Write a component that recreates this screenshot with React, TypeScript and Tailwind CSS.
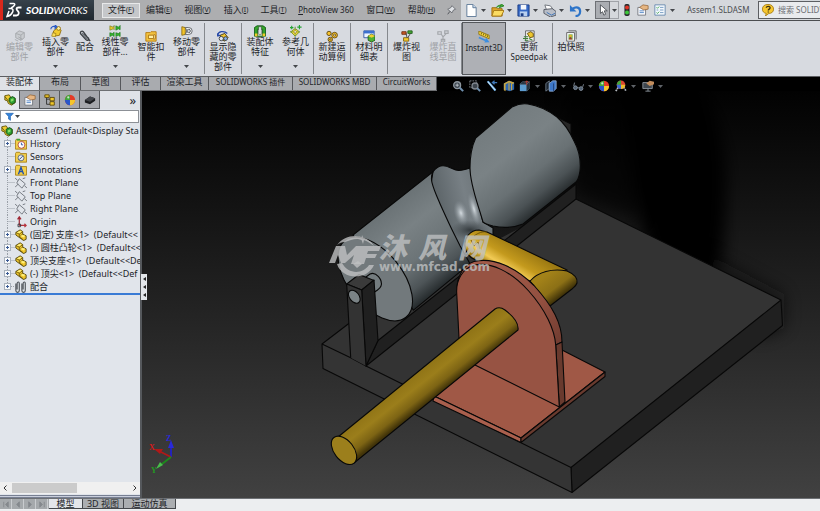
import React, { useState } from "react";

interface Command {
    label: string[];
    icon: string;
    width: string;
    menu?: boolean;
    disabled?: boolean;
    pressed?: boolean;
    divider?: boolean;
}

interface TreeItem {
    text: string;
    icon: string;
    expandable?: boolean;
}

const menus = [
    { text: "文件", key: "F", width: "w-[38px]" },
    { text: "编辑", key: "E", width: "w-[38px]" },
    { text: "视图", key: "V", width: "w-[39px]" },
    { text: "插入", key: "I", width: "w-[38px]" },
    { text: "工具", key: "T", width: "w-[37px]" },
    { text: "PhotoView 360", key: "", width: "w-[68px]" },
    { text: "窗口", key: "W", width: "w-[41px]" },
    { text: "帮助", key: "H", width: "w-[41px]" },
];

const commands: Command[] = [
    { label: ["编辑零", "部件"], icon: "editPart", width: "w-[37px]", disabled: true },
    { label: ["插入零", "部件"], icon: "insert", width: "w-[35px]", menu: true },
    { label: ["配合"], icon: "clip", width: "w-[24px]" },
    { label: ["线性零", "部件..."], icon: "pattern", width: "w-[36px]", menu: true },
    { label: ["智能扣", "件"], icon: "fastener", width: "w-[36px]" },
    { label: ["移动零", "部件"], icon: "move", width: "w-[35px]", menu: true, divider: true },
    { label: ["显示隐", "藏的零", "部件"], icon: "hidden", width: "w-[36px]", divider: true },
    { label: ["装配体", "特征"], icon: "feature", width: "w-[36px]", menu: true },
    { label: ["参考几", "何体"], icon: "geometry", width: "w-[35px]", menu: true, divider: true },
    { label: ["新建运", "动算例"], icon: "gears", width: "w-[36px]", divider: true },
    { label: ["材料明", "细表"], icon: "bom", width: "w-[36px]", divider: true },
    { label: ["爆炸视", "图"], icon: "explode", width: "w-[37px]" },
    { label: ["爆炸直", "线草图"], icon: "explodeLine", width: "w-[36px]", disabled: true, divider: true },
    { label: ["Instant3D"], icon: "ruler", width: "w-[44px]", pressed: true },
    { label: ["更新", "Speedpak"], icon: "speedpak", width: "w-[46px]", divider: true },
    { label: ["拍快照"], icon: "snapshot", width: "w-[36px]" },
];

const ribbonTabs = [
    { text: "装配体", width: "w-[40px]" },
    { text: "布局", width: "w-[41px]" },
    { text: "草图", width: "w-[40px]" },
    { text: "评估", width: "w-[40px]" },
    { text: "渲染工具", width: "w-[48px]" },
    { text: "SOLIDWORKS 插件", width: "w-[84px]" },
    { text: "SOLIDWORKS MBD", width: "w-[84px]" },
    { text: "CircuitWorks", width: "w-[60px]" },
];

const treeItems: TreeItem[] = [
    { text: "History", icon: "history", expandable: true },
    { text: "Sensors", icon: "sensors" },
    { text: "Annotations", icon: "annotations", expandable: true },
    { text: "Front Plane", icon: "plane" },
    { text: "Top Plane", icon: "plane" },
    { text: "Right Plane", icon: "plane" },
    { text: "Origin", icon: "origin" },
    { text: "(固定) 支座<1>  (Default<<", icon: "part", expandable: true },
    { text: "(-) 圆柱凸轮<1>  (Default<<", icon: "part", expandable: true },
    { text: "顶尖支座<1>  (Default<<De", icon: "part", expandable: true },
    { text: "(-) 顶尖<1>  (Default<<Def", icon: "part", expandable: true },
    { text: "配合", icon: "mates", expandable: true },
];

const isLatin = (text: string) => /[A-Za-z]{4}/.test(text);

const folder = <path d="M.5 3l1-1.500h4L6.500 3h7v10H.5z" fill="#f3cf4b" stroke="#a47c14" />;

const icons: Record<string, React.ReactNode> = {
    editPart: (
        <g fill="#c9ccd0" stroke="#a3a6aa">
            <path d="M2 4l4-3 6 2v6l-4 3-6-3z" />
            <path d="M2 4l6 2v6M8 6l4-3M5 8l5 3M1 11l4 2" fill="none" />
        </g>
    ),
    insert: (
        <g>
            <path d="M4 7l5-4 4 3-2 6-6 1z" fill="#f2cb2f" stroke="#8d6b0c" />
            <circle cx="10" cy="4" r="2.200" fill="#fff39a" stroke="#8d6b0c" />
            <path d="M1 5c0-3 3-4 5-3M6 0v4L8 2z" fill="none" stroke="#2457c5" strokeWidth="1.300" />
            <path d="M3 9l4 1-1 4-4-1z" fill="#f7dc57" stroke="#8d6b0c" strokeWidth=".7" />
        </g>
    ),
    clip: (
        <g fill="none" stroke="#3c4044" strokeWidth="1.600">
            <path d="M13 13L5 2C3.500.5.8 2 2 4.500L8 11c2 2 4 .5 3-1.500L5.500 4" />
            <path d="M3.500 3.500l6 7" stroke="#70757b" strokeWidth="1.800" />
        </g>
    ),
    pattern: (
        <g>
            <path d="M1 1l4 1.500 1-2v5l-1-1L1 6z" fill="#e9c52d" stroke="#6f7d1a" strokeWidth=".7" />
            <g fill="#35b52c" stroke="#17701a" strokeWidth=".7">
                <path d="M8 1l3 1.500L13 .5v5l-2-1L8 6z" />
                <path d="M1 9l3 1 2-1.500v5L4 12l-3 1.500zM8 9l3 1 2-1.500v5L11 12l-3 1.500z" />
            </g>
        </g>
    ),
    fastener: (
        <g>
            <path d="M1 3h5l1-1h6v11H1z" fill="#f4c440" stroke="#b4770c" />
            <path d="M4 6h6v4H4zM10 5l2 1v4l-2 1" fill="#fff0a6" stroke="#a46b0b" />
        </g>
    ),
    move: (
        <g>
            <path d="M1 2l4 1v8l-4 1z" fill="#f2c52b" stroke="#8d6b0c" />
            <path d="M5 3h4a4 4 0 0 1 0 8H5l2-4z" fill="#fff" stroke="#51555b" />
            <circle cx="9" cy="7" r="2" fill="#cdd1d6" stroke="#51555b" />
        </g>
    ),
    hidden: (
        <g>
            <path d="M1 6c0-4 7-6 11-2M0 4l1 3 3-1" fill="none" stroke="#2548a8" strokeWidth="1.500" />
            <path d="M4 6l5-2 4 5-4 4-5-3z" fill="#f1c62d" stroke="#3c3312" />
            <circle cx="5" cy="10" r="2.500" fill="#dfe6ef" stroke="#353b43" />
            <circle cx="10" cy="10" r="2.200" fill="#88b0e4" stroke="#353b43" />
        </g>
    ),
    feature: (
        <g>
            <path d="M.5 3l3-2h7l3 2v10H.5z" fill="#35a52b" stroke="#0e5513" />
            <path d="M4 5h6v8H4z" fill="#d9efdb" stroke="#0e5513" />
            <path d="M5.500 2h3v9h-3z" fill="#eef0f2" stroke="#333" strokeWidth=".6" />
            <path d="M1 10h3v3H1zM10 10h3v3h-3z" fill="#f0c928" />
        </g>
    ),
    geometry: (
        <g>
            <path d="M6 4l5 4-5 5-5-5z" fill="#f3dc3b" stroke="#7c8c22" />
            <path d="M6 2v12M0 8h12" stroke="#4a8535" strokeDasharray="1.500 1" />
            <path d="M11 0v5M8.500 2.500h5M2 1v4M0 3h4" stroke="#24a332" strokeWidth="1.300" />
            <circle cx="6" cy="8" r="1.500" fill="#fff" stroke="#a08a15" />
        </g>
    ),
    gears: (
        <g fill="#f7c22d" stroke="#5a420b">
            <circle cx="3.500" cy="4" r="2.500" />
            <circle cx="10" cy="6" r="3.300" />
            <circle cx="5" cy="11" r="2.600" />
            <circle cx="5" cy="11" r=".8" fill="#fff" />
            <circle cx="10" cy="6" r="1.200" fill="#fff" />
        </g>
    ),
    bom: (
        <g>
            <path d="M1 1h12v8H1z" fill="#eef4ff" stroke="#2a50a0" />
            <path d="M1 1h12v3H1z" fill="#3c70cf" />
            <path d="M6 7l4-2 4 2v5l-4 2-4-2z" fill="#4eb034" stroke="#1b5c1a" />
            <path d="M6 7l4 2 4-2-4-2z" fill="#f3cd31" />
        </g>
    ),
    explode: (
        <g>
            <path d="M1 2h5v3H1z" fill="#cf5a26" stroke="#6c2b0d" />
            <path d="M8 1h5v3H8z" fill="#46a935" stroke="#205c18" />
            <path d="M3 9h6v4H3z" fill="#f4ca2f" stroke="#7c5c0c" />
            <path d="M6 4l1 5M11 4L8 9" stroke="#3c3c3c" />
        </g>
    ),
    explodeLine: (
        <g fill="none" stroke="#a2a5a9" strokeWidth="1.300">
            <path d="M1 2h4v3H1zM9 1h4v3H9zM5 5l2 3 4-4M7 8v5M5 11h4v3H5z" />
        </g>
    ),
    ruler: (
        <g>
            <path d="M1 0l12 5v4L1 4z" fill="#f4d53d" stroke="#8b7013" />
            <path d="M4 2v2M6.500 3v2M9 4v2M11 5v2" stroke="#6c560d" />
            <path d="M1 7.500l8 3.500" stroke="#3d8ee0" strokeWidth="2" />
            <path d="M9.500 8l4 5-6 .5z" fill="#3d8ee0" />
        </g>
    ),
    speedpak: (
        <g>
            <path d="M3 1h10v12H3z" fill="#f5f5f2" stroke="#56585c" />
            <path d="M5 4l4-2 3 2v4L8 9z" fill="#edc62e" stroke="#5d480b" />
            <path d="M1 8h5M0 10h6M2 12h4M7 10l4 2" stroke="#3d7f34" strokeWidth="1.200" />
        </g>
    ),
    snapshot: (
        <g>
            <path d="M4 1h9v10" fill="none" stroke="#555" />
            <path d="M2 3h9v10H2z" fill="#fff" stroke="#555" />
            <path d="M4 5h5v6H4z" fill="#7cae59" />
            <circle cx="6.500" cy="7" r="1.500" fill="#e7b626" />
            <path d="M4 11l2-3 3 3z" fill="#9c3e2e" />
        </g>
    ),
    assembly: (
        <g>
            <path d="M1 2l5-1 2 3 5 1v5l-4 3-4-2-1-3-3-1z" fill="#f0cc31" stroke="#5d5108" />
            <path d="M6 5l4-2 3 2v5l-4 2-3-3z" fill="#2fa235" stroke="#0d4a12" />
            <path d="M8 6l3-1v3L8 9z" fill="#8ade65" />
            <path d="M1 3l4 5" stroke="#5d5108" />
        </g>
    ),
    property: (
        <g>
            <path d="M1 4h9v9H1z" fill="#f6f8fb" stroke="#70757c" />
            <path d="M3 8h5M3 10h5" stroke="#4d82c4" />
            <path d="M3 4l4-3 6 1v4L8 7z" fill="#e6b682" stroke="#8c5e34" strokeWidth=".8" />
        </g>
    ),
    config: (
        <g>
            <path d="M3 2v10h5M3 6h5" fill="none" stroke="#292929" />
            <path d="M1 1h5v3H1zM7 4h5v4H7zM7 9h5v4H7z" fill="#f1c92b" stroke="#56430a" />
        </g>
    ),
    ball: (
        <g>
            <circle cx="7" cy="7" r="6" fill="#e43b26" />
            <path d="M7 1a6 6 0 0 0-6 6h6z" fill="#3fa83c" />
            <path d="M1 7a6 6 0 0 0 6 6V7z" fill="#2956c9" />
            <path d="M7 13a6 6 0 0 0 6-6H7z" fill="#f5c62b" />
            <circle cx="5" cy="4" r="1.300" fill="#fff" opacity=".7" />
        </g>
    ),
    dim: (
        <g>
            <path d="M1 7l6-4 6 2v3l-6 4-6-2z" fill="#1d1f22" />
            <path d="M1 7l6-4 6 2-6 4z" fill="#44474c" />
        </g>
    ),
    funnel: <path d="M1 2h12L8.500 7v6l-3-2V7z" fill="#3585dc" stroke="#1d5cab" />,
    history: (
        <g>
            {folder}
            <circle cx="7.500" cy="8" r="4" fill="#fff" stroke="#b0413a" />
            <path d="M7.500 5.500V8h2" fill="none" stroke="#274c9e" />
            <path d="M2 2h4" stroke="#3aa13b" strokeWidth="2" />
        </g>
    ),
    sensors: (
        <g>
            {folder}
            <circle cx="7" cy="8" r="3.500" fill="#e6ecf5" stroke="#556174" />
            <path d="M5 10l4-4" stroke="#20396c" />
        </g>
    ),
    annotations: (
        <g>
            {folder}
            <path d="M4 12l3-8 3 8M5 9h4" fill="none" stroke="#1d4fae" strokeWidth="1.500" />
        </g>
    ),
    plane: (
        <g fill="none" stroke="#666b73">
            <path d="M5 2l7 6-4 5-6-6zM0 1l3 3M0 12l4-4M14 13l-3-3M9 2l3-1" />
        </g>
    ),
    origin: (
        <g fill="none" strokeWidth="1.400">
            <path d="M5 11V2M3 4l2-3 2 3" stroke="#9f2734" />
            <path d="M5 11h8M11 9l2 2-2 2" stroke="#b5333d" />
            <path d="M3.500 9.500h3v3h-3z" stroke="#30343a" strokeWidth="1" />
        </g>
    ),
    part: (
        <g>
            <path d="M1 4l5-3 3 2v3l4 2v4l-3 1.500L1 7z" fill="#efc52c" stroke="#4c410c" />
            <path d="M1 4l4 2 4-3M5 6v3l4-3M5 9l5 4" fill="none" stroke="#6d5a0b" />
            <path d="M2 4l4-2 2 1-3 2zM6 8l3-1 3 1-2 2z" fill="#fff07a" />
        </g>
    ),
    mates: (
        <g fill="none" stroke="#4e5359" strokeWidth="1.300">
            <path d="M1 3v8c0 3 4 3 4 0V3C5 0 2.500 1 2.500 3v7M8 3v8c0 3 4 3 4 0V3c0-3-2.500-2-2.500 0v7" />
        </g>
    ),
    pin: (
        <g>
            <path d="M7 1l5 5-3 1-2 4-6-5 4-2z" fill="#dfe2e6" stroke="#54585e" />
            <path d="M4 9l-3 4" stroke="#54585e" strokeWidth="1.400" />
        </g>
    ),
    newDoc: (
        <g>
            <path d="M2 .5h6.500L12 4v9.500H2z" fill="#fff" stroke="#5c7896" />
            <path d="M8.500.5V4H12" fill="#cbdcf0" stroke="#5c7896" />
        </g>
    ),
    open: (
        <g>
            <path d="M1 4h5l1 1h5v8H1z" fill="#dda62a" stroke="#9b6c12" />
            <path d="M3 7h11l-3 6H1z" fill="#fbdc62" stroke="#a87a18" />
            <path d="M6 4c1-3 4-3 5-2M9 4l5-2-3-2z" fill="#49ae37" stroke="#2b8628" />
        </g>
    ),
    save: (
        <g>
            <path d="M1 1h12v12H1z" fill="#3569c6" stroke="#1b3d84" />
            <path d="M4 1h6v5H4z" fill="#f4f7fb" />
            <path d="M3 8h8v5H3z" fill="#b9d0ef" />
            <path d="M4 10h3v3H4z" fill="#1b3d84" />
        </g>
    ),
    print: (
        <g>
            <path d="M2 1l6 1 3 4-7 1z" fill="#fff" stroke="#6b7078" />
            <path d="M1 6l9-1 4 3v4l-6 2-7-4z" fill="#b9bec7" stroke="#555a62" />
            <path d="M4 9l5 3 4-2" fill="none" stroke="#3b72b7" />
        </g>
    ),
    undo: (
        <g>
            <path d="M4 5c4-3 8-1 8 3 0 3-2 5-5 5" fill="none" stroke="#2e75c9" strokeWidth="2.400" />
            <path d="M1 1v7h7z" fill="#2e75c9" />
        </g>
    ),
    cursor: <path d="M4 1v10l2.500-2L8 13l2-1-1.500-4H12z" fill="#fff" stroke="#44484e" />,
    traffic: (
        <g>
            <rect x="4" y="0" width="6" height="14" rx="2" fill="#2b2d2e" />
            <circle cx="7" cy="4" r="2.300" fill="#e33526" />
            <circle cx="7" cy="10" r="2.300" fill="#3cc83a" />
        </g>
    ),
    list: (
        <g>
            <path d="M1 1h12v12H1z" fill="#f3f8fd" stroke="#5f83aa" />
            <path d="M3 4l1 1 2-2M3 10l1 1 2-2" fill="none" stroke="#2d9c3a" />
            <path d="M7 4h4M7 7h4M7 10h4M3 7h2" stroke="#6d94bd" />
        </g>
    ),
    help: (
        <g>
            <path d="M7 .5c4 0 6.500 2.200 6.500 5.500S11 11 8 11l-4 3 1-3C2 10.500.5 8.500.5 6 .5 2.500 3 .5 7 .5z" fill="#f7c730" stroke="#a47a13" />
            <path d="M5 4.500c0-2.500 4.500-2.300 4.500 0C9.500 6 7.300 6 7.300 7.500M7.300 8.800V10" fill="none" stroke="#3d3210" strokeWidth="1.500" />
        </g>
    ),
    zoomFit: (
        <g fill="none" stroke="#8d959d">
            <circle cx="6" cy="6" r="4" fill="#3c454e" strokeWidth="1.600" />
            <path d="M4 6h4M6 4v4" stroke="#c6ccd2" />
            <path d="M9 9l4 4" stroke="#6f8fae" strokeWidth="2.400" />
        </g>
    ),
    zoomArea: (
        <g fill="none" stroke="#7f868e">
            <path d="M1 1h8v8H1z" strokeDasharray="2 1" />
            <circle cx="7" cy="7" r="3.500" fill="#3c444c" strokeWidth="1.500" />
            <path d="M9.500 9.500l3.500 3.500" stroke="#6f8fae" strokeWidth="2.400" />
        </g>
    ),
    previous: (
        <g>
            <path d="M1 2l2-1 9 10-2 2z" fill="#4f9ddd" />
            <path d="M2 2l9 10" stroke="#cfe3f4" strokeWidth="1.200" />
            <path d="M13 3H8M10 1L7.500 3 10 5" fill="none" stroke="#3f77b5" strokeWidth="1.500" />
        </g>
    ),
    section: (
        <g>
            <path d="M1 4l6-3 6 2v8l-5 2-7-2z" fill="#2d67b2" />
            <path d="M1 4l6-3 6 2-1 2-5-2-4 2v8l-2-1z" fill="#c7a643" />
            <path d="M7 3v9M10 4v8" stroke="#c7a643" strokeWidth="1.300" />
        </g>
    ),
    orient: (
        <g>
            <path d="M1 5h8v8H1z" fill="#5c9cd0" />
            <path d="M1 5l3-3h8L9 5z" fill="#22303d" stroke="#5b7389" strokeWidth=".7" />
            <path d="M9 5l3-3v8l-3 3z" fill="#1d2934" stroke="#5b7389" strokeWidth=".7" />
            <path d="M9 6V1M7 3l2-2 2 2" fill="none" stroke="#c23f33" />
        </g>
    ),
    display: (
        <g>
            <path d="M1 4l4-3v9l-4 3z" fill="#1b2530" stroke="#74818f" />
            <path d="M5 4l4-3h4v9l-3 3H5z" fill="#3d78c9" stroke="#8ea9cc" />
            <path d="M10 4v9" stroke="#1c3c72" />
        </g>
    ),
    glasses: (
        <g fill="#536273" stroke="#8893a0">
            <circle cx="4" cy="9" r="2.200" />
            <circle cx="10.500" cy="10" r="2.200" />
            <path d="M2 7l1-4M12.500 8l1-3M6 9h2" fill="none" />
        </g>
    ),
    scene: (
        <g>
            <path d="M1 13l3-5h6l3 5" fill="none" stroke="#b6bbc1" strokeWidth="2" strokeDasharray="2 1" />
            <circle cx="7" cy="5.500" r="5" fill="#db4430" />
            <path d="M7 .5a5 5 0 0 0-5 5h5z" fill="#3fa83c" />
            <path d="M2 5.500a5 5 0 0 0 5 5v-5z" fill="#3a68d6" />
            <path d="M7 10.500a5 5 0 0 0 5-5H7z" fill="#e9bd2b" />
        </g>
    ),
    viewSettings: (
        <g>
            <path d="M1 3h11v7H1z" fill="#3f474f" stroke="#959da5" />
            <path d="M4 13h6M7 10v3" stroke="#959da5" />
            <path d="M5 4l4-3 5 1v3l-5 2z" fill="#c18c5c" />
        </g>
    ),
};

const Icon = ({ name, className = "size-3" }: { name: string; className?: string }) => (
    <svg viewBox="0 0 14 14" className={`${className} shrink-0`} aria-hidden="true">
        {icons[name]}
    </svg>
);

const Caret = ({ className = "text-[#44474b]" }: { className?: string }) => (
    <svg viewBox="0 0 5 3" className={`h-[3px] w-[5px] shrink-0 ${className}`} aria-hidden="true">
        <path d="M0 0h5L2.500 3z" fill="currentColor" />
    </svg>
);

const TitleBar = () => (
    <header className="flex h-[21px] shrink-0 border-b border-[#4b4d50] bg-[#adaeb0]">
        <div className="flex w-[94px] shrink-0 items-center gap-1 border-l-[3px] border-[#d9281c] bg-linear-to-b from-[#37424b] to-[#20282f] pl-[3px] text-white">
            <svg viewBox="0 0 16 16" className="h-4 w-4 shrink-0" aria-hidden="true">
                <path d="M3.500 1.500h4c2.500 0 1 3-2.500 4.500M2.500 6.500H5C9 6.500 6.500 13.500 1 14.500L3 9" fill="none" stroke="#fff" strokeWidth="1.500" />
                <path d="M15.500 5.500h-3c-2.500 0-2.500 2-.7 3.500s1 4.500-1.300 4.500H7" fill="none" stroke="#fff" strokeWidth="1.800" />
            </svg>
            <span className="font-[Lato,sans-serif] text-[10px] leading-none italic">
                <b className="font-black">SOLID</b>WORKS
            </span>
        </div>
        <nav className="flex shrink-0 items-center pl-2">
            {menus.map((menu, index) => (
                <button
                    key={menu.text}
                    className={`flex h-[15px] items-center justify-center whitespace-nowrap ${menu.width} ${index === 0 ? "border border-[#e8e9ea] bg-[#c5c7ca]" : ""}`}
                >
                    {menu.key ? menu.text : (
                        <span className="text-[8px]"><u>P</u>hotoView 360</span>
                    )}
                    {menu.key && <span className="text-[7px]">(<u>{menu.key}</u>)</span>}
                </button>
            ))}
            <button aria-label="Pin menu" className="flex w-[19px] justify-center"><Icon name="pin" className="size-[10px]" /></button>
        </nav>
        <div className="flex min-w-0 flex-1 items-center bg-[#d5d8dc] pl-1">
            {["newDoc", "open", "save", "print", "undo"].map(name => (
                <button key={name} aria-label={name} className="flex w-[26px] shrink-0 items-center gap-[3px]">
                    <Icon name={name} className="size-[13px]" />
                    <Caret />
                </button>
            ))}
            <button aria-label="Select" className="flex h-[18px] w-[15px] shrink-0 items-center justify-center border border-[#6d7075] bg-[#aaadb2]">
                <Icon name="cursor" />
            </button>
            <button aria-label="Select options" className="flex h-[18px] w-[9px] shrink-0 items-center justify-center border border-l-0 border-[#a0a3a8]">
                <Caret />
            </button>
            <button aria-label="Rebuild" className="flex w-4 shrink-0 justify-center"><Icon name="traffic" /></button>
            <button aria-label="Properties" className="flex w-4 shrink-0 justify-center"><Icon name="property" /></button>
            <button aria-label="Options" className="flex w-[24px] shrink-0 items-center justify-end gap-1">
                <Icon name="list" />
                <Caret />
            </button>
            <span className="ml-3 w-[71px] shrink-0 text-[8px] text-[#4c4e52]">Assem1.SLDASM</span>
            <label className="flex h-[18px] min-w-0 flex-1 items-center gap-1 border border-r-0 border-[#5c5e62] bg-[#e9ebee] pl-[3px]">
                <Icon name="help" />
                <input aria-label="搜索" placeholder="搜索 SOLIDWORKS" className="w-0 min-w-0 flex-1 text-[8px] outline-none placeholder:text-[#6e7075]" />
            </label>
        </div>
    </header>
);

const Ribbon = () => (
    <section className="flex h-[55px] shrink-0 items-stretch bg-[#d7dae0] py-px pl-px">
        {commands.map(command => (
            <React.Fragment key={command.icon}>
                <button
                    disabled={command.disabled}
                    className={`flex shrink-0 flex-col items-center ${command.width} ${command.menu ? "pt-[3px]" : "pt-2"} ${command.disabled ? "text-[#a0a2a6]" : "text-[#222428]"} ${command.pressed ? "border border-[#55585c] bg-[#aeb0b5]" : ""}`}
                >
                    <Icon name={command.icon} />
                    {command.label.map(line => (
                        <span key={line} className={`leading-[10px] whitespace-nowrap ${isLatin(line) ? "text-[8px]" : ""}`}>{line}</span>
                    ))}
                    {command.menu && <span className="pt-2"><Caret /></span>}
                </button>
                {command.divider && <i className="my-px w-px shrink-0 bg-[#85888d]" />}
            </React.Fragment>
        ))}
    </section>
);

const hudIcons = [
    { name: "zoomFit", width: "w-[17px]" },
    { name: "zoomArea", width: "w-[17px]" },
    { name: "previous", width: "w-[17px]" },
    { name: "section", width: "w-[16px]" },
    { name: "orient", width: "w-[26px]", menu: true },
    { name: "display", width: "w-[27px]", menu: true },
    { name: "glasses", width: "w-[26px]", menu: true },
    { name: "ball", width: "w-[17px]" },
    { name: "scene", width: "w-[27px]", menu: true },
    { name: "viewSettings", width: "w-[26px]", menu: true },
];

const TabStrip = () => {
    const [active, setActive] = useState("装配体");

    return (
        <div className="flex h-[15px] shrink-0 border-t border-[#5c5e62] bg-black">
            <div role="tablist" className="flex shrink-0 border-b border-[#6d6f72]">
                {ribbonTabs.map(tab => (
                    <button
                        key={tab.text}
                        role="tab"
                        aria-selected={active === tab.text}
                        onClick={() => setActive(tab.text)}
                        className={`flex items-center justify-center border-r border-[#55575b] pb-1 leading-none whitespace-nowrap ${tab.width} ${isLatin(tab.text) ? "text-[8px]" : ""} ${active === tab.text ? "bg-[#dfe2e7]" : "bg-[#a9abaf]"}`}
                    >
                        {tab.text}
                    </button>
                ))}
            </div>
            <div className="relative z-10 flex h-[18px] items-center pl-[15px]">
                {hudIcons.map(item => (
                    <button key={item.name} aria-label={item.name} className={`flex shrink-0 items-center gap-1 ${item.width}`}>
                        <Icon name={item.name} />
                        {item.menu && <Caret className="text-[#5f6368]" />}
                    </button>
                ))}
            </div>
        </div>
    );
};

const FeaturePanel = () => {
    const [tab, setTab] = useState("assembly");

    return (
        <aside className="flex w-[142px] shrink-0 flex-col border-r-2 border-[#55585c] bg-[#e1e5eb]">
            <div className="flex h-[18px] shrink-0 bg-[#dfe2e7]">
                {["assembly", "property", "config", "ball", "dim"].map(name => (
                    <button
                        key={name}
                        aria-label={name}
                        onClick={() => setTab(name)}
                        className={`flex w-5 items-center justify-center border-r border-[#55585c] ${tab === name ? "bg-[#e6e9ee]" : "border-b bg-[#a6a8ad]"}`}
                    >
                        <Icon name={name} />
                    </button>
                ))}
                <button aria-label="More" className="ml-auto pr-1 text-[13px] leading-none">»</button>
            </div>
            <div className="mt-px mr-px flex h-[13px] shrink-0 items-center gap-px border border-[#8c9096] bg-white pl-1">
                <Icon name="funnel" className="size-[9px]" />
                <Caret />
                <input aria-label="Filter" className="h-full min-w-0 flex-1 outline-none" />
            </div>
            <div className="flex-1 overflow-hidden pt-px whitespace-pre">
                <div className="flex h-[13px] items-center gap-[3px] pl-px">
                    <Icon name="assembly" />
                    Assem1  (Default&lt;Display Sta
                </div>
                <ul className="border-b-2 border-[#3a7bd5]">
                    {treeItems.map((item, index) => (
                        <li key={index} className="flex h-[13px] items-center">
                            <svg viewBox="0 0 15 13" className="h-[13px] w-[15px] shrink-0" aria-hidden="true">
                                <path d={index === treeItems.length - 1 ? "M7.500 0v6.500H15" : "M7.500 0v13M7.500 6.500H15"} fill="none" stroke="#9aa0a8" strokeDasharray="1 1" />
                                {item.expandable && (
                                    <>
                                        <rect x="4.500" y="3.500" width="6" height="6" fill="#f8fafc" stroke="#a9b1bc" />
                                        <path d="M6 6.500h3M7.500 5v3" stroke="#3a5a94" />
                                    </>
                                )}
                            </svg>
                            <Icon name={item.icon} />
                            <span className="pl-[3px]">{item.text}</span>
                        </li>
                    ))}
                </ul>
            </div>
            <div className="flex h-3 shrink-0 items-center bg-[#f0f0f0] px-[3px]">
                <svg viewBox="0 0 4 6" className="h-[6px] w-1"><path d="M3.500.5L1 3l2.500 2.500" fill="none" stroke="#333" /></svg>
                <div className="mx-[5px] flex h-full flex-1 py-px"><div className="w-[56%] bg-[#cbcbcb]" /></div>
                <svg viewBox="0 0 4 6" className="h-[6px] w-1"><path d="M.5.5L3 3 .5 5.500" fill="none" stroke="#333" /></svg>
            </div>
            <div className="mt-px h-[3px] shrink-0 border-y border-[#777f92] bg-[#c9cedb]" />
        </aside>
    );
};

const Model = () => (
    <svg viewBox="142 91 678 407" preserveAspectRatio="xMidYMid slice" className="block size-full" role="img" aria-label="Assem1">
        <defs>
            <linearGradient id="back" x1="0" y1="0" x2="0" y2="1">
                <stop offset="0" stopColor="#020202" />
                <stop offset=".25" stopColor="#111" />
                <stop offset=".6" stopColor="#272727" />
                <stop offset="1" stopColor="#414141" />
            </linearGradient>
            <linearGradient id="steel" gradientUnits="userSpaceOnUse" x1="352" y1="234" x2="413" y2="312">
                <stop offset="0" stopColor="#6a7275" />
                <stop offset=".3" stopColor="#798184" />
                <stop offset=".6" stopColor="#6c7477" />
                <stop offset=".83" stopColor="#4d5457" />
                <stop offset="1" stopColor="#202527" />
            </linearGradient>
            <linearGradient id="steelFar" gradientUnits="userSpaceOnUse" x1="495" y1="122" x2="556" y2="199">
                <stop offset="0" stopColor="#747c7f" />
                <stop offset=".35" stopColor="#7a8285" />
                <stop offset=".65" stopColor="#697174" />
                <stop offset=".85" stopColor="#4b5255" />
                <stop offset="1" stopColor="#262b2d" />
            </linearGradient>
            <linearGradient id="neck" gradientUnits="userSpaceOnUse" x1="435" y1="195" x2="482" y2="184">
                <stop offset="0" stopColor="#5c6468" />
                <stop offset=".6" stopColor="#788085" />
                <stop offset="1" stopColor="#6c7478" />
            </linearGradient>
            <radialGradient id="shine">
                <stop offset="0" stopColor="#d5dce1" />
                <stop offset="1" stopColor="#8b949a" stopOpacity="0" />
            </radialGradient>
            <radialGradient id="shade">
                <stop offset="0" stopColor="#33393c" />
                <stop offset="1" stopColor="#454c50" stopOpacity="0" />
            </radialGradient>
            <linearGradient id="rod" gradientUnits="userSpaceOnUse" x1="410" y1="377" x2="429" y2="401">
                <stop offset="0" stopColor="#8f7316" />
                <stop offset=".4" stopColor="#9b7e1b" />
                <stop offset=".75" stopColor="#7d6414" />
                <stop offset="1" stopColor="#423409" />
            </linearGradient>
            <linearGradient id="tip" gradientUnits="userSpaceOnUse" x1="527" y1="249" x2="510" y2="277">
                <stop offset="0" stopColor="#9c7912" />
                <stop offset=".5" stopColor="#c49a1d" />
                <stop offset=".8" stopColor="#f2cb55" />
                <stop offset="1" stopColor="#a37d13" />
            </linearGradient>
            <linearGradient id="tipEnd" gradientUnits="userSpaceOnUse" x1="546" y1="275" x2="562" y2="296">
                <stop offset="0" stopColor="#a38219" />
                <stop offset=".6" stopColor="#8c7016" />
                <stop offset="1" stopColor="#3d3008" />
            </linearGradient>
            <linearGradient id="rim" gradientUnits="userSpaceOnUse" x1="480" y1="262" x2="562" y2="345">
                <stop offset="0" stopColor="#a45b4a" />
                <stop offset=".6" stopColor="#935040" />
                <stop offset="1" stopColor="#6f3b30" />
            </linearGradient>
            <filter id="soft" filterUnits="userSpaceOnUse" x="500" y="30" width="320" height="400">
                <feGaussianBlur stdDeviation="8" />
            </filter>
        </defs>
        <rect x="142" y="91" width="678" height="407" fill="url(#back)" />
        <path d="M620 60h60c30 20 46 80 46 120 0 50-2 84-14 110l-60-30-20-70z" fill="#020202" filter="url(#soft)" />
        <path d="M560 90h80v130l-64-26z" fill="#060606" opacity=".6" filter="url(#soft)" />
        <path d="M700 250l84 44v34l-25 10z" fill="#0c0c0c" opacity=".6" filter="url(#soft)" />

        <g stroke="#080808" strokeWidth="1.100" strokeLinejoin="round">
            <path d="M553 116l4 1 14 7v60h-18z" fill="#272727" />
            <path d="M322 344L377 302 576 199 781 300 571 467.500z" fill="#333" stroke="none" />
            <path d="M322 344L377 302M576 199l205 101" fill="none" />
            <path d="M571 467.500L781 300l1.500 25.500L572 492.500z" fill="#202020" />
            <path d="M322 344l28.700 13.700L366 366l205 101.500 1 25L323 368.500z" fill="#343434" />
            <path d="M378 340.500L576 184v15L366 366z" fill="#202020" />

            <path d="M433 171.700c3-4 6-6 10-6 6 0 11 5 16 4.700 4 0 7-1 11-2.400l13 54 10 6v14l-30 14-24-32-8-40z" fill="url(#neck)" />
            <ellipse cx="470" cy="230" rx="20" ry="10" fill="url(#shade)" stroke="none" />
            <ellipse cx="461" cy="213" rx="7" ry="13" fill="url(#shine)" stroke="none" transform="rotate(-15 461 213)" />
            <ellipse cx="474" cy="209" rx="5" ry="17" fill="url(#shine)" stroke="none" transform="rotate(-15 474 209)" />
            <path d="M353 235l80-63.300c-2 4-2 7-1 11 2 8 5 14 8 21 5 11 9 20 13 28 3 6 5 10 7 14l10 18-56.500 46.500z" fill="url(#steel)" />
            <path d="M475.700 138L512 107c6-3 10-4 16-3 13 2 21 7 29 13 8 7 13 15 17 24 6 11 7 20 6 30-1 6-2 9-4 11l-53 42c-10 4-21 4-30 2-4-1-8-2-10-4-5-18-13-37-13-54 0-12 1-20 5.700-30z" fill="url(#steelFar)" />
            <ellipse cx="375.300" cy="279" rx="49" ry="27" transform="rotate(51.300 375.300 279)" fill="#72797c" />

            <path d="M362 280l8-6c6-3 13 6 11 12-1 3-6 6-9 7z" fill="#747c7f" />
            <path d="M346.700 284l12.300-9.500 15 6-12.300 9.500z" fill="#3a3a3a" />
            <path d="M361.700 290l12.300-10 4 60.500L366 366z" fill="#202020" />
            <path d="M350.700 357.700l-4-73.700 15 6 4.300 76" fill="#333" />
            <ellipse cx="354.300" cy="296.700" rx="7.300" ry="4.800" transform="rotate(52 354.300 296.700)" fill="#7b8386" />

            <path d="M465 246c-1-8 5-16 14-16l8 2 80 38-37 11-54-21c-6-2-10-7-11-14z" fill="url(#tip)" />
            <path d="M474 236c4-3 9-5 13-4M471 240l3 6 4-4 2 7" fill="none" stroke="#5f4a0a" strokeWidth=".8" />
            <path d="M530 281c8-9 22-13 37-10 7 3 11 7 10 12-1 3-3 4-5 6l-22 17z" fill="url(#tipEnd)" />

            <path d="M562 350l43 22-84 66-87-42 60-50z" fill="#a05846" />
            <path d="M434 396l87 42v4.500L433 401z" fill="#a95f4d" />
            <path d="M521 438l84-66v4.500l-84 66z" fill="#693a2e" />
            <path d="M457 290c0-15 7-25 17-28.500 20-5 43 7 60 24 19 21 28 38 28 56.500l-6 3z" fill="url(#rim)" />
            <path d="M555.700 345l6.300-3 3 60-5.700 5z" fill="#693a2e" />
            <path d="M456.700 293c-.700-13 6-25 18-28 16-3 36 6 54 26 17 19 26 39 27 54l3.600 62-82.300-41-17-8z" fill="#975343" />
            <path d="M338.300 436.700L495 309c3-2 6-2 10 1 8 6 14 13 13 20L354 463z" fill="url(#rod)" />
            <ellipse cx="344" cy="450.300" rx="16.300" ry="9.800" transform="rotate(51.700 344 450.300)" fill="#9c7f1c" />
        </g>

        <g fill="#bfc1c2" fillOpacity=".8">
            <path d="M337 245c8-11 24-12 34-3l3 4c-9-7-16-8-23-6l-6 2c-3 0-6 1-8 3zM337 264c5 16 30 17 37 1h-5c-7 10-21 9-27-2zM362 235l1.500 3.500 4 .5-3.500 1-1 4-1.500-4-3.500-1 3.500-.5z" />
            <path d="M329 263l7-17h9l2 9 9-9h8l-5 18h-8l3-9-9 8h-4l-3-8-3 8zM362 246h19l-2 5h-11l-1 3h10l-2 4h-9l-2 6h-7z" />
            <path d="M353 264l5-3 4 3-5 4z" />
            <g className="font-['Noto_Sans_CJK_SC',sans-serif] text-[28px] font-black italic">
                <text x="379" y="258">沐</text>
                <text x="418" y="258">风</text>
                <text x="458" y="258">网</text>
            </g>
            <text x="379" y="271" className="font-['DejaVu_Sans',sans-serif] text-[12px] font-bold">www.mfcad.com</text>
        </g>

        <g strokeWidth="1.800" fontSize="8" fontWeight="bold" className="font-['Liberation_Serif',serif]">
            <path d="M171 457v-12" stroke="#2222c8" />
            <path d="M171 440l-3 8h6z" fill="#2929dc" />
            <path d="M171 457l-10-5" stroke="#b01818" />
            <path d="M154 449l9 0-3 5z" fill="#b01818" />
            <path d="M171 457l-9 7" stroke="#1d8a1d" />
            <path d="M156 469l4-7 3 3z" fill="#49c04b" />
            <text x="166" y="441" fill="#2929dc">Z</text>
            <text x="149" y="450" fill="#d31b1b">X</text>
            <text x="151" y="473" fill="#229b22">Y</text>
        </g>
    </svg>
);

const BottomTabs = () => {
    const [active, setActive] = useState("模型");
    const tabs = [
        { text: "模型", width: "w-[34px]" },
        { text: "3D 视图", width: "w-[41px]" },
        { text: "运动仿真", width: "w-[52px]" },
    ];

    return (
        <footer className="flex h-[13px] shrink-0 border-t border-[#6d7074] bg-[#eceef0] pb-[2px]">
            <div className="flex w-[49px] shrink-0 gap-px bg-[#a5a9ac] pl-px">
                {["M3 2v6M8 2L5 5l3 3z", "M7 2L4 5l3 3z", "M4 2l3 3-3 3z", "M3 2l3 3-3 3zM8 2v6"].map(path => (
                    <button key={path} aria-label="Scroll tabs" disabled className="flex w-[11px] items-center justify-center border-r border-[#c9cccf]">
                        <svg viewBox="0 0 11 10" className="h-[9px] w-[10px]"><path d={path} fill="#85898d" stroke="#85898d" /></svg>
                    </button>
                ))}
            </div>
            {tabs.map(tab => (
                <button
                    key={tab.text}
                    onClick={() => setActive(tab.text)}
                    className={`flex shrink-0 items-center justify-center border-r border-b border-[#44474b] leading-none ${tab.width} ${active === tab.text ? "bg-[#e3e6ea]" : "bg-[#abaeb1]"}`}
                >
                    {tab.text}
                </button>
            ))}
        </footer>
    );
};

const App = () => (
    <div className="flex h-screen flex-col overflow-hidden bg-[#d7dae0] font-['Noto_Sans','Noto_Sans_CJK_SC',sans-serif] text-[9px] text-[#222428]">
        <TitleBar />
        <Ribbon />
        <TabStrip />
        <main className="flex min-h-0 flex-1">
            <FeaturePanel />
            <section className="relative min-w-0 flex-1 bg-black">
                <Model />
                <button aria-label="Collapse panel" className="absolute top-[45%] left-[-1px] flex h-[26px] w-[6px] flex-col items-center justify-around bg-[#e3e6ea] py-px">
                    {[0, 1, 2].map(mark => (
                        <svg key={mark} viewBox="0 0 3 4" className="h-1 w-[3px]"><path d="M3 0v4L0 2z" fill="#222" /></svg>
                    ))}
                </button>
            </section>
        </main>
        <BottomTabs />
    </div>
);

export default App;
